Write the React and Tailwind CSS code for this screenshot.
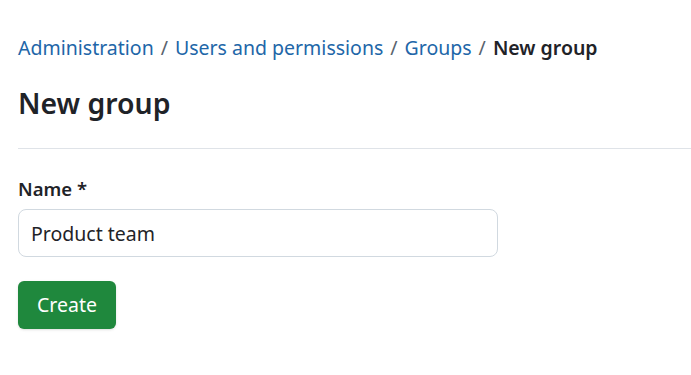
import React, { useState } from "react";

const crumbs = ["Administration", "Users and permissions", "Groups"];

const App = () => {
    const [name, setName] = useState("Product team");

    return (
        <div className="min-h-screen bg-white text-[#1f2328] font-['Noto_Sans',sans-serif] overflow-hidden">
            <div className="pl-[18px] pt-[34px]">
                <nav className="flex items-center text-[19.5px] leading-[28px]">
                    {crumbs.map((c) => (
                        <span key={c} className="flex items-center">
                            <a href="#" className="text-[#2166a8] hover:underline">{c}</a>
                            <span className="text-[#59636e] mx-[7px]">/</span>
                        </span>
                    ))}
                    <span className="font-semibold">New group</span>
                </nav>

                <h1 className="mt-[21px] text-[28.4px] leading-[40px] font-semibold">New group</h1>

                <hr className="mt-[25px] border-t border-[#dfe3e8]" />

                <form className="mt-[28px]" onSubmit={(e) => e.preventDefault()}>
                    <label className="block text-[18.5px] leading-[24px] font-semibold">Name *</label>
                    <input
                        type="text"
                        value={name}
                        onChange={(e) => setName(e.target.value)}
                        className="mt-[8px] block w-[480px] h-[48px] px-[12px] text-[19.5px] border border-[#d1d9e0] rounded-[8px] focus:outline-none"
                    />
                    <button
                        type="submit"
                        className="mt-[24px] h-[48px] px-[19px] rounded-[6px] bg-[#1f883d] hover:bg-[#1a7f37] text-white text-[19.5px] shadow-sm"
                    >
                        Create
                    </button>
                </form>
            </div>
        </div>
    );
};

export default App;
